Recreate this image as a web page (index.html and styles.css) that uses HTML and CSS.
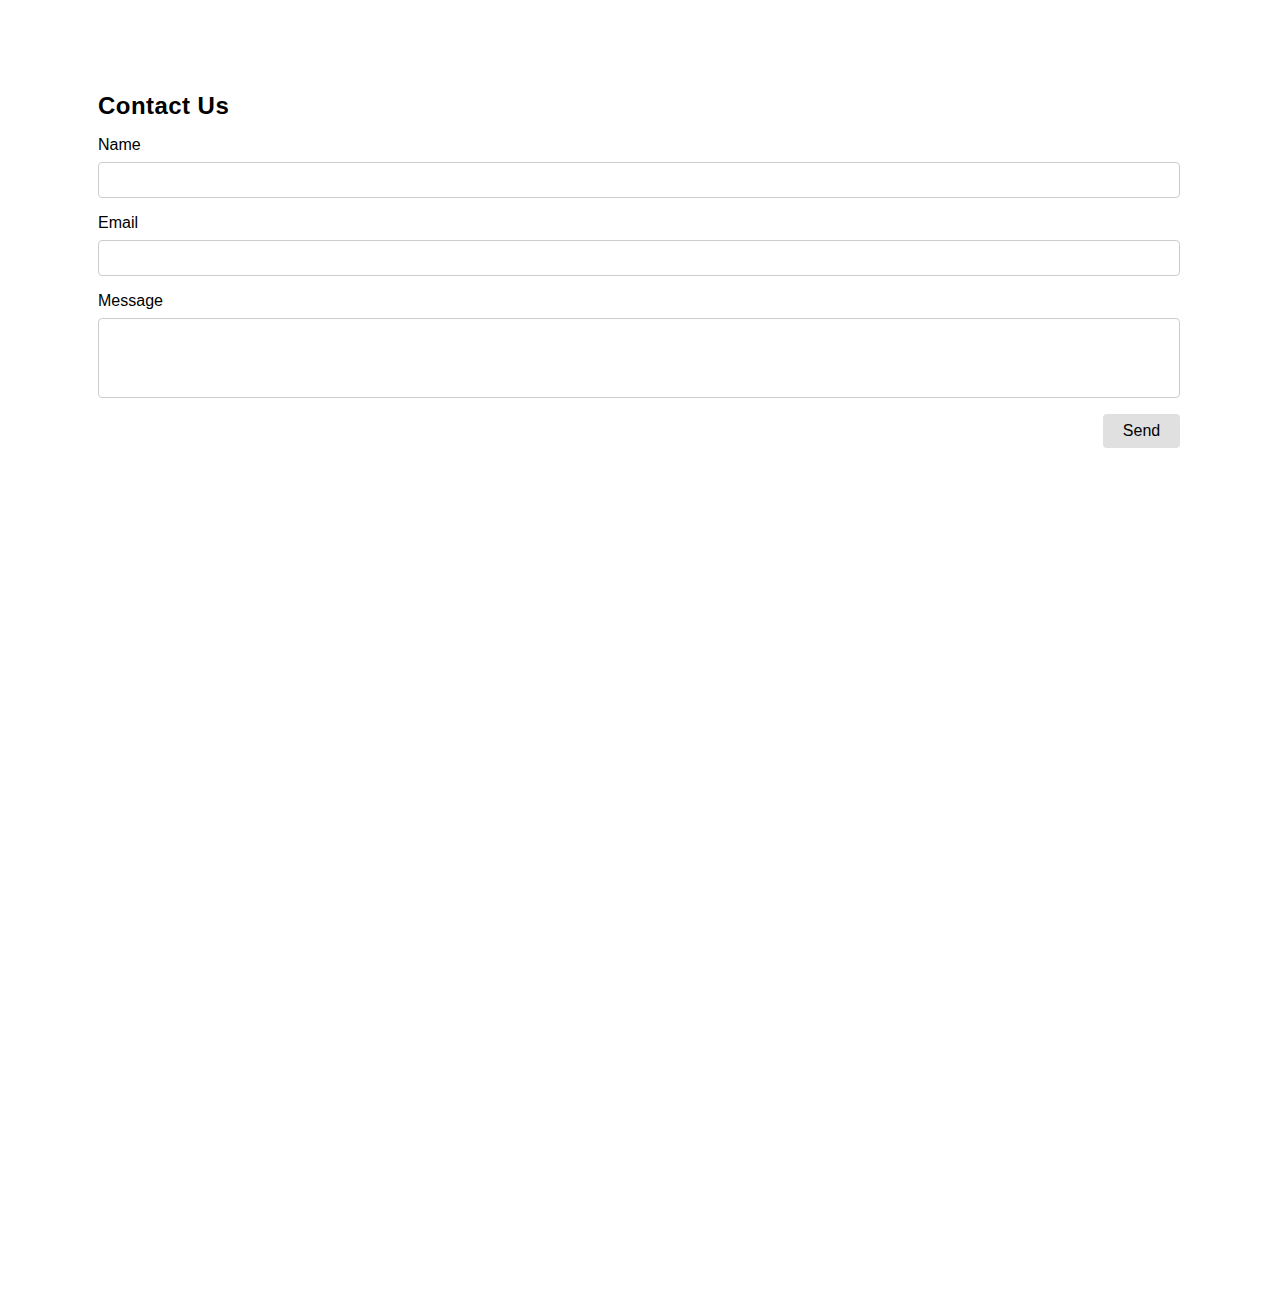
FILE: index.html
```html
<!DOCTYPE html>
<html lang="en">
<head>
<meta charset="utf-8">
<title>Contact Us</title>
<link rel="stylesheet" href="styles.css">
</head>
<body>
<main class="page">
  <h1 class="title">Contact Us</h1>
  <form class="form">
    <div class="field">
      <label class="label" for="name">Name</label>
      <input class="input" id="name" type="text">
    </div>
    <div class="field">
      <label class="label" for="email">Email</label>
      <input class="input" id="email" type="email">
    </div>
    <div class="field">
      <label class="label" for="message">Message</label>
      <textarea class="input textarea" id="message"></textarea>
    </div>
    <div class="actions">
      <button class="btn" type="button">Send</button>
    </div>
  </form>
</main>
</body>
</html>
```
FILE: styles.css
```css
html, body {
  margin: 0;
  padding: 0;
  background: #ffffff;
}
body {
  font-family: "Liberation Sans", Arial, sans-serif;
  color: #000;
}
.page {
  width: 1082px;
  margin: 0 auto;
  padding-top: 92px;
}
.title {
  margin: 0 0 15px;
  font-size: 24px;
  line-height: 28px;
  font-weight: bold;
  letter-spacing: 0.45px;
}
.form {
  display: flex;
  flex-direction: column;
}
.field {
  display: flex;
  flex-direction: column;
  margin-bottom: 15px;
}
.label {
  font-size: 16px;
  line-height: 18px;
  padding-top: 1px;
  margin-bottom: 8px;
}
.input {
  box-sizing: border-box;
  width: 100%;
  height: 36px;
  margin: 0;
  border: 1px solid #cccccc;
  border-radius: 4px;
  background: #fff;
  font-family: "Liberation Sans", Arial, sans-serif;
  font-size: 16px;
  padding: 6px 10px;
}
.textarea {
  height: 80px;
  resize: none;
  display: block;
}
.actions {
  display: flex;
  justify-content: flex-end;
  margin-top: 1px;
}
.btn {
  box-sizing: border-box;
  height: 34px;
  width: 77px;
  padding: 0;
  border: none;
  border-radius: 4px;
  background: #e0e0e0;
  color: #000;
  font-family: "Liberation Sans", Arial, sans-serif;
  font-size: 16px;
}
```
